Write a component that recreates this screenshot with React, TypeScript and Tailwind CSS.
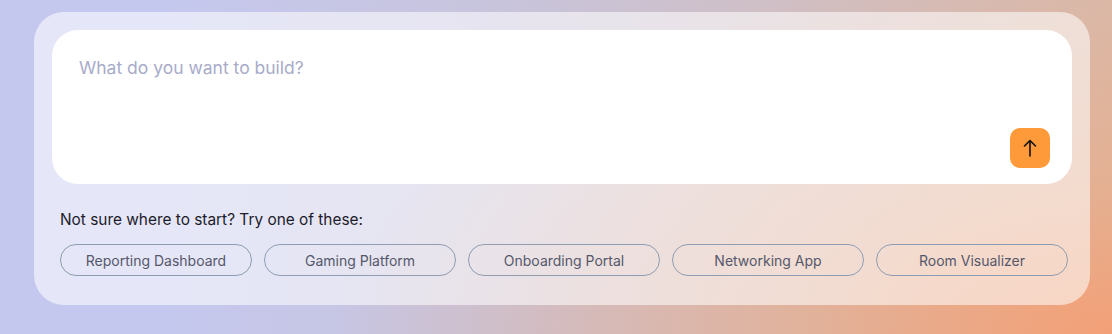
import React from "react";

const ideas = [
  "Reporting Dashboard",
  "Gaming Platform",
  "Onboarding Portal",
  "Networking App",
  "Room Visualizer",
];

function ArrowUp() {
  return (
    <svg width="18" height="18" viewBox="0 0 18 18" fill="none">
      <path
        d="M9 17V1.5M3.5 7L9 1.5L14.5 7"
        stroke="#111"
        strokeWidth="1.6"
        strokeLinecap="round"
        strokeLinejoin="round"
      />
    </svg>
  );
}

export default function App() {
  return (
    <div
      className="w-[1112px] h-[334px] pt-3 pl-[34px] bg-[radial-gradient(ellipse_70%_110%_at_100%_100%,#f3a077_0%,rgba(236,170,130,0.6)_40%,rgba(220,190,175,0)_100%),linear-gradient(90deg,#c5c8ee_15%,#c8c4dc_45%,#d9b9aa_100%)]"
      style={{ fontFamily: "Inter, 'Noto Sans', sans-serif" }}
    >
      <div className="w-[1056px] rounded-[30px] bg-white/55 px-[18px] pt-[18px] pb-[29px]">
        <div className="h-[154px] rounded-[26px] bg-white pl-[27px] pr-[22px] pt-[27px] pb-4 flex flex-col justify-between">
          <p className="text-[17.5px] leading-[22px] text-[#a8abc9]">
            What do you want to build?
          </p>
          <div className="flex justify-end">
            <button className="w-10 h-10 rounded-[10px] bg-[#ff9a3a] flex items-center justify-center">
              <ArrowUp />
            </button>
          </div>
        </div>
        <p className="mt-[26px] pl-2 text-[15.4px] leading-5 text-[#1c1c2a]">
          Not sure where to start? Try one of these:
        </p>
        <div className="mt-[14px] pl-2 flex gap-3">
          {ideas.map((t) => (
            <div
              key={t}
              className="w-[192px] h-8 rounded-full border border-[#8f9db3] flex items-center justify-center text-[14px] text-[#55586a]"
            >
              {t}
            </div>
          ))}
        </div>
      </div>
    </div>
  );
}
